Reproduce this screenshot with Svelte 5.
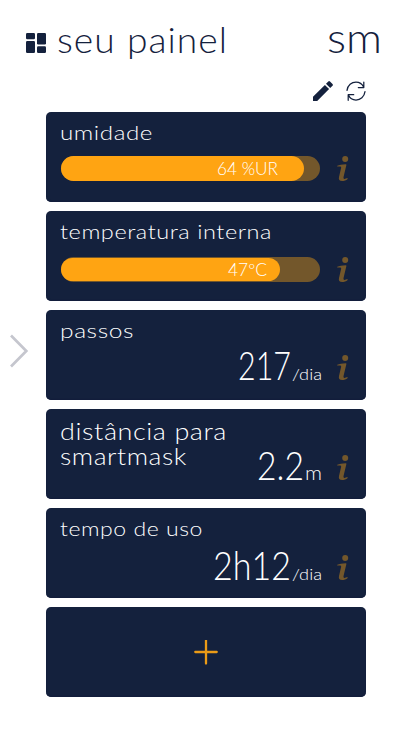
<script>
  const metrics = [
    { title: [['umidade', 93]], size: 20.5, bottom: 21, unit: '64 %UR', unitWidth: 61, fill: 243, end: 26, inset: 0 },
    { title: [['temperatura interna', 212]], size: 20.5, bottom: 19, unit: '47ºC', unitWidth: 39, fill: 219, end: 13, inset: 1 },
    { title: [['passos', 74]], size: 20.5, bottom: 20, value: '217', valueWidth: 53, unit: '/dia', unitWidth: 30, unitSize: 15 },
    { title: [['distância para', 167], ['smartmask', 127]], size: 22.5, bottom: 19, value: '2.2', valueWidth: 47, unit: 'm', unitWidth: 17, unitSize: 20 },
    { title: [['tempo de uso', 143]], size: 20.5, bottom: 18, value: '2h12', valueWidth: 78, unit: '/dia', unitWidth: 30, unitSize: 15 }
  ];
</script>

{#snippet label(text, width, size, height)}
  <svg class="label" {width} {height}>
    <text x="0" y={height} font-size={size} textLength={width} lengthAdjust="spacingAndGlyphs">{text}</text>
  </svg>
{/snippet}

{#snippet info()}
  <svg class="info" width="12" height="25" viewBox="0 0 12 25">
    <circle cx="8.2" cy="3" r="3" />
    <path d="M.2 9.8C2.400 8.7 5 8.3 8.700 8.2c.6 0 .8.3.7.9L6.600 20.800c-.3 1.400 0 2.100.9 2.100.9 0 1.800-.3 2.900-.8l.3.8C9.100 24.300 7.200 25 5.100 25c-2.700 0-3.700-1.500-3.100-4.100l2.100-9c.2-1-.1-1.500-1.200-1.500H.2z" />
  </svg>
{/snippet}

<div class="screen">
  <header>
    <svg class="grid-icon" width="20" height="20" viewBox="0 0 20 20">
      <rect width="9" height="6.3" rx="1.2" />
      <rect y="8" width="9" height="12" rx="1.2" />
      <rect x="11" width="9" height="11.5" rx="1.2" />
      <rect x="11" y="13.3" width="9" height="6.7" rx="1.2" />
    </svg>
    <h1>{@render label('seu painel', 171, 34.5, 26)}</h1>
    <div class="brand">{@render label('sm', 55, 41, 26)}</div>
  </header>

  <div class="tools">
    <svg width="20" height="20" viewBox="0 0 20 20">
      <path fill="#14213d" d="M0 15.8 11.9 3.9l4.2 4.2L4.2 20H0zM13 2.8 15.3.5q.8-.8 1.7 0l2.5 2.5q.8.9 0 1.7L17.2 7z" />
    </svg>
    <svg width="20" height="20" viewBox="0 0 20 20" fill="none" stroke="#14213d" stroke-width="1.25" stroke-linecap="round" stroke-linejoin="round">
      <path d="M1 9.3C1.7 4 5.6 1 10 1c3.4 0 6.2 1.9 7.6 5M17.8 1v5.5h-5.5M19 10.7C18.3 16 14.4 19 10 19c-3.4 0-6.2-1.9-7.6-5M2.2 19.3v-5.6h5.5" />
    </svg>
  </div>

  <div class="body">
    <aside>
      <svg width="20" height="34" viewBox="0 0 20 34" fill="none" stroke="#c5c6ce" stroke-width="2.7">
        <path d="M1 1.5 16.3 17 1 32.5" />
      </svg>
    </aside>
    <main>
      {#each metrics as m}
        <section class="card">
          <div class="title">
            {#each m.title as [text, width]}
              {@render label(text, width, m.size, m.title.length > 1 ? 25 : 22)}
            {/each}
          </div>
          <div class="reading" style:margin-bottom="{m.bottom}px">
            {#if m.fill}
              <div class="track">
                <div class="fill" style:width="{m.fill}px" style:height="{25 - m.inset * 2}px" style:padding-right="{m.end}px">
                  {@render label(m.unit, m.unitWidth, 17, 12)}
                </div>
              </div>
            {:else}
              <div class="value">{@render label(m.value, m.valueWidth, 38.5, 28)}</div>
              {@render label(m.unit, m.unitWidth, m.unitSize, 20)}
            {/if}
            {@render info()}
          </div>
        </section>
      {/each}
      <button class="card add" aria-label="+">
        <svg width="25" height="25" viewBox="0 0 25 25" stroke="#eb9b17" stroke-width="2.3" stroke-linecap="round">
          <path d="M12 .5v23M1.3 12h21.4" />
        </svg>
      </button>
    </main>
  </div>
</div>

<style>
  .screen {
    width: 411px;
    height: 731px;
    overflow: hidden;
    background: #fff;
    font-family: Lato, "Open Sans", sans-serif;
    font-weight: 300;
    color: #14213d;
  }
  svg { display: block; flex: none; }
  .label { overflow: visible; fill: currentColor; }
  .title .label, h1 .label { letter-spacing: 0.03em; }
  header {
    display: flex;
    align-items: flex-end;
    height: 53px;
    padding: 0 29px 0 26px;
  }
  .grid-icon { fill: #14213d; }
  h1 { margin: 0 0 0 11px; font-weight: 300; }
  .brand { margin-left: auto; }
  .tools {
    display: flex;
    justify-content: flex-end;
    gap: 13px;
    padding: 28px 45px 11px 0;
  }
  .body { display: flex; }
  aside {
    box-sizing: border-box;
    width: 46px;
    padding: 222px 0 0 10px;
  }
  main {
    display: flex;
    flex-direction: column;
    gap: 9px;
    width: 320px;
  }
  .card {
    display: grid;
    height: 90px;
    border-radius: 5px;
    background: #14213d;
    box-shadow: inset 0 -1px 1px #121d3b;
    color: #fff;
  }
  .title {
    grid-area: 1 / 1;
    align-self: start;
    padding: 6px 0 0 14px;
  }
  .reading {
    grid-area: 1 / 1;
    align-self: end;
    display: flex;
    justify-content: flex-end;
    align-items: flex-end;
    padding-right: 17px;
  }
  .value { margin-right: 1px; }
  .info { margin-left: 15px; fill: #73572b; }
  .track {
    display: flex;
    align-items: center;
    width: 259px;
    height: 25px;
    border-radius: 13px;
    background: #73572b;
  }
  .track + .info { margin-left: 17px; }
  .fill {
    box-sizing: border-box;
    display: flex;
    align-items: center;
    justify-content: flex-end;
    border-radius: 13px;
    background: #ffa412;
  }
  .reading:has(.track) { padding: 0 0 0 15px; justify-content: flex-start; }
  .add {
    width: 320px;
    border: 0;
    padding: 0;
    place-items: center;
  }
</style>
